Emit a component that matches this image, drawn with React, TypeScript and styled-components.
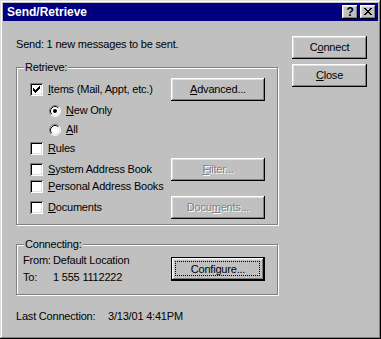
import styled, { createGlobalStyle } from "styled-components";

const GlobalStyle = createGlobalStyle`
  html, body {
    margin: 0;
    padding: 0;
    background: #c0c0c0;
  }
  body {
    font-family: "Liberation Sans", Arial, sans-serif;
    font-size: 11px;
    letter-spacing: -0.2px;
    color: #000;
  }
`;

const Window = styled.div`
  width: 381px;
  height: 339px;
  box-sizing: border-box;
  padding: 3px;
  background: #c0c0c0;
  box-shadow: inset -1px -1px #000, inset 1px 1px #dfdfdf, inset -2px -2px #808080,
    inset 2px 2px #fff;
  display: flex;
  flex-direction: column;
`;

const TitleBar = styled.div`
  height: 18px;
  background: #000080;
  display: flex;
  align-items: center;
  padding: 0 2px;
`;

const Title = styled.div`
  flex: 1;
  color: #fff;
  font-weight: bold;
  font-size: 12px;
  letter-spacing: 0;
  padding-left: 2px;
`;

const TitleButtons = styled.div`
  display: flex;
  gap: 2px;
`;

const TitleButton = styled.div`
  width: 16px;
  height: 14px;
  box-sizing: border-box;
  background: #c0c0c0;
  box-shadow: inset -1px -1px #000, inset 1px 1px #fff, inset -2px -2px #808080,
    inset 2px 2px #dfdfdf;
  display: flex;
  align-items: center;
  justify-content: center;
  font-weight: bold;
  font-size: 12px;
  line-height: 14px;
  padding-bottom: 1px;
`;

const Body = styled.div`
  flex: 1;
  display: grid;
  grid-template-columns: 262px 75px;
  column-gap: 14px;
  padding: 15px 0 0 13px;
  align-items: start;
`;

const LeftColumn = styled.div`
  display: flex;
  flex-direction: column;
`;

const RightColumn = styled.div`
  display: flex;
  flex-direction: column;
  gap: 5px;
`;

const Text = styled.div<{ $mt?: number }>`
  line-height: 13px;
  margin-top: ${(p) => p.$mt ?? 0}px;
  white-space: nowrap;
`;

const GroupBox = styled.div<{ $mt: number; $pad: string }>`
  position: relative;
  margin-top: ${(p) => p.$mt}px;
  padding: ${(p) => p.$pad};
  border: 1px solid #808080;
  box-shadow: inset 1px 1px #fff, 1px 1px #fff;
`;

const GroupLabel = styled.span`
  position: absolute;
  top: -7px;
  left: 7px;
  padding: 0 1px;
  line-height: 13px;
  background: #c0c0c0;
`;

const Row = styled.div<{ $h: number }>`
  display: grid;
  grid-template-columns: 141px 94px;
  align-items: center;
  height: ${(p) => p.$h}px;
`;

const Option = styled.label<{ $indent?: number }>`
  display: flex;
  align-items: center;
  gap: 5px;
  padding-left: ${(p) => p.$indent ?? 0}px;
  white-space: nowrap;
  line-height: 13px;
`;

const CheckBox = styled.span`
  width: 13px;
  height: 13px;
  flex: none;
  background: #fff;
  box-shadow: inset 1px 1px #808080, inset -1px -1px #fff, inset 2px 2px #000,
    inset -2px -2px #dfdfdf;
  display: block;
  svg {
    display: block;
  }
`;

const Button = styled.div<{ $w: number; $default?: boolean; $disabled?: boolean }>`
  position: relative;
  width: ${(p) => p.$w}px;
  height: ${(p) => (p.$default ? 24 : 23)}px;
  box-sizing: border-box;
  background: #c0c0c0;
  display: flex;
  align-items: center;
  justify-content: center;
  line-height: 13px;
  color: ${(p) => (p.$disabled ? "#808080" : "#000")};
  text-shadow: ${(p) => (p.$disabled ? "1px 1px #fff" : "none")};
  box-shadow: ${(p) =>
    p.$default
      ? "inset 0 0 0 1px #000, inset -2px -2px #000, inset 2px 2px #fff, inset -3px -3px #808080, inset 3px 3px #dfdfdf"
      : "inset -1px -1px #000, inset 1px 1px #fff, inset -2px -2px #808080, inset 2px 2px #dfdfdf"};

  ${(p) =>
    p.$default &&
    `
    &::after {
      content: "";
      position: absolute;
      inset: 4px 5px 5px 4px;
      border: 1px dotted #000;
    }
  `}
`;

const Key = styled.u`
  text-decoration-thickness: 1px;
  text-underline-offset: 1px;
`;

const ConnectGrid = styled.div`
  display: grid;
  grid-template-columns: 148px 94px;
  align-items: center;
`;

const InfoRow = styled.div<{ $labelW: number; $h: number }>`
  display: grid;
  grid-template-columns: ${(p) => p.$labelW}px auto;
  height: ${(p) => p.$h}px;
  align-items: center;
  line-height: 13px;
  white-space: nowrap;
`;

function Check({ checked }: { checked?: boolean }) {
  return (
    <CheckBox>
      {checked && (
        <svg width="13" height="13" viewBox="0 0 13 13" shapeRendering="crispEdges">
          <path
            fill="#000"
            d="M9 3h1v1h-1z M8 4h2v1h-2z M3 5h1v1h-1z M7 5h3v1h-3z M3 6h2v1h-2z M6 6h3v1h-3z M3 7h5v1h-5z M4 8h3v1h-3z M5 9h1v1h-1z"
          />
        </svg>
      )}
    </CheckBox>
  );
}

function Radio({ checked }: { checked?: boolean }) {
  return (
    <svg width="12" height="12" viewBox="0 0 12 12" style={{ flex: "none" }}>
      <circle cx="6" cy="6" r="5" fill="#fff" />
      <path d="M9.89 2.11 A5.5 5.5 0 0 0 2.11 9.89" stroke="#808080" fill="none" />
      <path d="M2.11 9.89 A5.5 5.5 0 0 0 9.89 2.11" stroke="#fff" fill="none" />
      <path d="M9.18 2.82 A4.5 4.5 0 0 0 2.82 9.18" stroke="#000" fill="none" />
      <path d="M2.82 9.18 A4.5 4.5 0 0 0 9.18 2.82" stroke="#dfdfdf" fill="none" />
      {checked && <circle cx="6" cy="6" r="2" fill="#000" />}
    </svg>
  );
}

export default function App() {
  return (
    <>
      <GlobalStyle />
      <Window>
        <TitleBar>
          <Title>Send/Retrieve</Title>
          <TitleButtons>
            <TitleButton>?</TitleButton>
            <TitleButton>
              <svg width="8" height="7" viewBox="0 0 8 7" shapeRendering="crispEdges">
                <path
                  fill="#000"
                  d="M0 0h2v1h-2z M6 0h2v1h-2z M1 1h2v1h-2z M5 1h2v1h-2z M2 2h4v1h-4z M3 3h2v1h-2z M2 4h4v1h-4z M1 5h2v1h-2z M5 5h2v1h-2z M0 6h2v1h-2z M6 6h2v1h-2z"
                />
              </svg>
            </TitleButton>
          </TitleButtons>
        </TitleBar>

        <Body>
          <LeftColumn>
            <Text $mt={2}>Send: 1 new messages to be sent.</Text>

            <GroupBox $mt={16} $pad="10px 0 9px 13px">
              <GroupLabel>Retrieve:</GroupLabel>
              <Row $h={23}>
                <Option>
                  <Check checked />
                  <span>
                    <Key>I</Key>tems (Mail, Appt, etc.)
                  </span>
                </Option>
                <Button $w={94}>
                  <span>
                    <Key>A</Key>dvanced...
                  </span>
                </Button>
              </Row>
              <Row $h={19}>
                <Option $indent={19}>
                  <Radio checked />
                  <span>
                    <Key>N</Key>ew Only
                  </span>
                </Option>
              </Row>
              <Row $h={19}>
                <Option $indent={19}>
                  <Radio />
                  <span>
                    <Key>A</Key>ll
                  </span>
                </Option>
              </Row>
              <Row $h={19}>
                <Option>
                  <Check />
                  <span>
                    <Key>R</Key>ules
                  </span>
                </Option>
              </Row>
              <Row $h={19}>
                <Option>
                  <Check />
                  <span>
                    <Key>S</Key>ystem Address Book
                  </span>
                </Option>
                <Button $w={94} $disabled>
                  <span>
                    <Key>F</Key>ilter...
                  </span>
                </Button>
              </Row>
              <Row $h={19}>
                <Option>
                  <Check />
                  <span>
                    <Key>P</Key>ersonal Address Books
                  </span>
                </Option>
              </Row>
              <Row $h={19}>
                <Option>
                  <Check />
                  <span>
                    <Key>D</Key>ocuments
                  </span>
                </Option>
                <Button $w={94} $disabled>
                  <span>
                    Docu<Key>m</Key>ents...
                  </span>
                </Button>
              </Row>
            </GroupBox>

            <GroupBox $mt={19} $pad="7px 0 8px 6px">
              <GroupLabel>Connecting:</GroupLabel>
              <ConnectGrid>
                <div>
                  <InfoRow $labelW={30} $h={17}>
                    <span>From:</span>
                    <span>Default Location</span>
                  </InfoRow>
                  <InfoRow $labelW={30} $h={17}>
                    <span>To:</span>
                    <span>1 555 1112222</span>
                  </InfoRow>
                </div>
                <Button $w={94} $default>
                  <span>Configure...</span>
                </Button>
              </ConnectGrid>
            </GroupBox>

            <Text $mt={15}>
              <InfoRow $labelW={92} $h={13}>
                <span>Last Connection:</span>
                <span>3/13/01 4:41PM</span>
              </InfoRow>
            </Text>
          </LeftColumn>

          <RightColumn>
            <Button $w={75}>
              <span>
                C<Key>o</Key>nnect
              </span>
            </Button>
            <Button $w={75}>
              <span>
                <Key>C</Key>lose
              </span>
            </Button>
          </RightColumn>
        </Body>
      </Window>
    </>
  );
}
